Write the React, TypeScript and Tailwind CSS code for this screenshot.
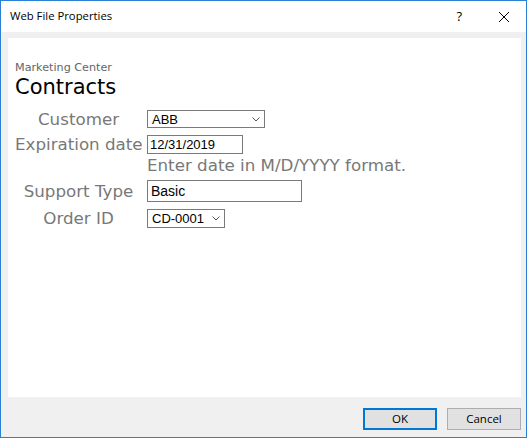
import React from "react";

const uiFont = { fontFamily: '"Open Sans", "Noto Sans", sans-serif' };
const formFont = { fontFamily: '"DejaVu Sans", Verdana, sans-serif' };
const fieldFont = { fontFamily: '"Liberation Sans", Arial, sans-serif' };

const Chevron = () => (
  <svg width="8" height="5" viewBox="0 0 8 5" className="shrink-0">
    <path d="M0.5 0.5 L4 4 L7.5 0.5" fill="none" stroke="#555" strokeWidth="1" />
  </svg>
);

const FieldRow = ({
  label,
  mt,
  h,
  children,
}: {
  label: string;
  mt: string;
  h: string;
  children: React.ReactNode;
}) => (
  <div className={`flex items-center ${mt} ${h}`}>
    <div className="w-[127px] text-center text-[16.7px] leading-[19px] text-[#787878] whitespace-nowrap" style={formFont}>
      {label}
    </div>
    <div className="ml-[5px] h-full">{children}</div>
  </div>
);

export default function App() {
  return (
    <div className="w-[528px] h-[439px] bg-white">
      <div className="w-[527px] h-[438px] border border-[#2a80d5] flex flex-col">
        {/* Title bar */}
        <div className="h-[31px] flex items-center bg-white" style={uiFont}>
          <span className="pl-[9px] text-[11.3px] text-black">Web File Properties</span>
          <div className="ml-auto flex items-center">
            <span className="text-[13px] text-black leading-none font-medium">?</span>
            <svg width="10" height="10" viewBox="0 0 10 10" className="ml-[37px] mr-[17px]">
              <path d="M0 0 L10 10 M10 0 L0 10" stroke="#000" strokeWidth="1" />
            </svg>
          </div>
        </div>

        {/* Body */}
        <div className="flex-1 bg-[#f0f0f0] flex flex-col pt-[6px] pl-[7px] pr-[5px]">
          <div className="h-[359px] bg-white pl-[7px] pt-[23px]">
            <div className="text-[11.2px] leading-[13px] text-[#666]" style={formFont}>
              Marketing Center
            </div>
            <div className="mt-[1px] text-[21px] leading-[24px] text-black" style={formFont}>
              Contracts
            </div>

            <FieldRow label="Customer" mt="mt-[11px]" h="h-[18px]">
              <div className="w-[118px] h-full border border-[#7a7a7a] bg-white flex items-center justify-between pl-[4px] pr-[4px]">
                <span className="text-[13px] leading-none text-black" style={fieldFont}>ABB</span>
                <Chevron />
              </div>
            </FieldRow>

            <FieldRow label="Expiration date" mt="mt-[7px]" h="h-[19px]">
              <div className="w-[96px] h-full border border-[#7a7a7a] bg-white flex items-center pl-[2px]">
                <span className="text-[13px] leading-none text-black" style={fieldFont}>12/31/2019</span>
              </div>
            </FieldRow>
            <div className="ml-[132px] mt-[2px] text-[16.7px] leading-[19px] text-[#787878] whitespace-nowrap" style={formFont}>
              Enter date in M/D/YYYY format.
            </div>

            <FieldRow label="Support Type" mt="mt-[5px]" h="h-[22px]">
              <div className="w-[155px] h-full border border-[#7a7a7a] bg-white flex items-center pl-[3px]">
                <span className="text-[14px] leading-none text-black" style={fieldFont}>Basic</span>
              </div>
            </FieldRow>

            <FieldRow label="Order ID" mt="mt-[7px]" h="h-[19px]">
              <div className="w-[78px] h-full border border-[#7a7a7a] bg-white flex items-center justify-between pl-[4px] pr-[4px]">
                <span className="text-[13px] leading-none text-black" style={fieldFont}>CD-0001</span>
                <Chevron />
              </div>
            </FieldRow>
          </div>

          {/* Buttons */}
          <div className="flex justify-end gap-[10px] pt-[11px]" style={uiFont}>
            <button className="w-[74px] h-[22px] border-2 border-[#0078d7] bg-[#e1e1e1] text-[11.5px] text-black flex items-center justify-center">
              OK
            </button>
            <button className="w-[74px] h-[22px] border border-[#adadad] bg-[#e1e1e1] text-[11.5px] text-black flex items-center justify-center">
              Cancel
            </button>
          </div>
        </div>
      </div>
    </div>
  );
}
